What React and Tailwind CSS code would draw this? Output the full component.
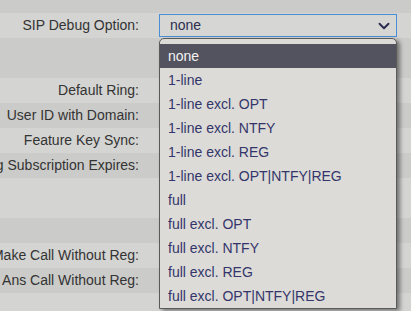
import React from "react";
import { ChevronDown } from "lucide-react";

const rows = [
  { h: "h-[13px]", tone: "dark", label: "" },
  { h: "h-[25px]", tone: "light", label: "SIP Debug Option:", select: true },
  { h: "h-[40px]", tone: "dark", label: "" },
  { h: "h-[25px]", tone: "light", label: "Default Ring:" },
  { h: "h-[25px]", tone: "dark", label: "User ID with Domain:" },
  { h: "h-[25px]", tone: "light", label: "Feature Key Sync:" },
  { h: "h-[25px]", tone: "dark", label: "Hoteling Subscription Expires:" },
  { h: "h-[40px]", tone: "light", label: "" },
  { h: "h-[25px]", tone: "dark", label: "" },
  { h: "h-[25px]", tone: "light", label: "Make Call Without Reg:" },
  { h: "h-[25px]", tone: "dark", label: "Ans Call Without Reg:" },
  { h: "h-[40px]", tone: "light", label: "" },
];

const options = [
  "none",
  "1-line",
  "1-line excl. OPT",
  "1-line excl. NTFY",
  "1-line excl. REG",
  "1-line excl. OPT|NTFY|REG",
  "full",
  "full excl. OPT",
  "full excl. NTFY",
  "full excl. REG",
  "full excl. OPT|NTFY|REG",
];

const App = () => {
  return (
    <div
      className="relative w-[411px] h-[311px] overflow-hidden bg-[#d4d4d2] text-[14px]"
      style={{ fontFamily: '"Liberation Sans", Arial, sans-serif' }}
    >
      {rows.map((row, i) => (
        <div
          key={i}
          className={`flex items-center ${row.h} ${
            row.tone === "dark" ? "bg-[#cbcbc9]" : "bg-[#d4d4d2]"
          }`}
        >
          <div className="w-[139px] shrink-0 flex justify-end whitespace-nowrap text-[#333333]">
            {row.label}
          </div>
          {row.select && (
            <div className="ml-[20px] w-[238px] h-[23px] flex items-center justify-between border border-[#4a8fd6] bg-[#d6d6d4] pl-[10px] pr-[3px] text-[#2d2f4f]">
              <span>none</span>
              <ChevronDown size={18} strokeWidth={2.6} className="text-[#2b2d52]" />
            </div>
          )}
        </div>
      ))}

      <div className="absolute left-[159px] top-[38px] w-[238px] pt-[5px] bg-[#dcdbd8] border border-[#5a5a5a] rounded-t-[5px] shadow-[3px_2px_4px_rgba(0,0,0,0.45)]">
        {options.map((opt, i) => (
          <div
            key={opt}
            className={`h-[24px] flex items-center pl-[8px] whitespace-nowrap ${
              i === 0 ? "bg-[#53525f] text-[#f2f2f2]" : "text-[#34366a]"
            }`}
          >
            {opt}
          </div>
        ))}
      </div>
    </div>
  );
};

export default App;
